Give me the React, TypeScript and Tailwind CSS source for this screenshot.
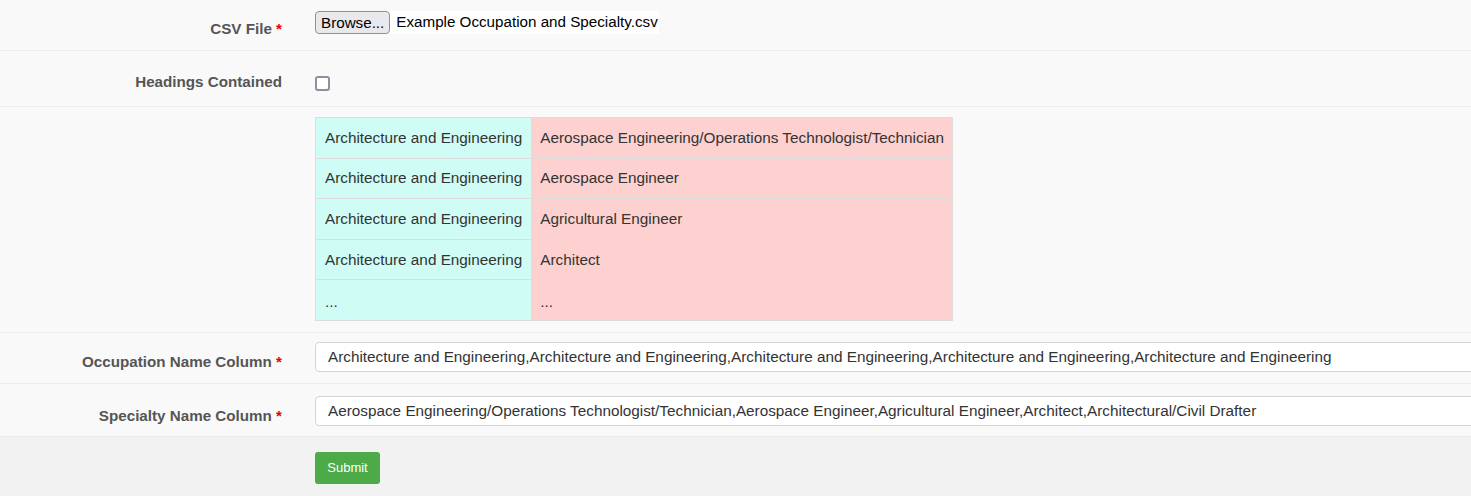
import React from 'react';

const rows = [
  ['Architecture and Engineering', 'Aerospace Engineering/Operations Technologist/Technician'],
  ['Architecture and Engineering', 'Aerospace Engineer'],
  ['Architecture and Engineering', 'Agricultural Engineer'],
  ['Architecture and Engineering', 'Architect'],
  ['...', '...'],
];

const Label = ({ text, required }: { text: string; required?: boolean }) => (
  <div className="w-[282px] shrink-0 text-right text-[15.2px] font-bold text-[#555]">
    {text}
    {required && <span className="text-[#e00]"> *</span>}
  </div>
);

const App = () => {
  return (
    <div
      className="w-full h-[496px] overflow-hidden bg-[#f9f9f9] text-[#333]"
      style={{ fontFamily: '"Liberation Sans", Arial, sans-serif' }}
    >
      {/* CSV file */}
      <div className="flex h-[51px] border-b border-[#ececec]">
        <div className="pt-[18px]">
          <Label text="CSV File" required />
        </div>
        <div className="ml-[33px] pt-[11px]">
          <div className="flex h-[23px] items-center bg-white pr-[1px]">
            <button className="h-[23px] rounded-[4px] border border-[#8f8f9d] bg-[#e9e9ed] px-[5px] text-[15.2px] text-black">
              Browse...
            </button>
            <span className="ml-[6px] text-[15.2px] text-black">Example Occupation and Specialty.csv</span>
          </div>
        </div>
      </div>

      {/* headings */}
      <div className="flex h-[56px] items-center border-b border-[#ececec] pt-[7px]">
        <Label text="Headings Contained" />
        <div className="ml-[33px] pt-[2px]">
          <div className="h-[15px] w-[15px] rounded-[3px] border-2 border-[#8f8f9d] bg-white" />
        </div>
      </div>

      {/* preview table */}
      <div className="flex h-[226px] border-b border-[#ececec] pt-[10px]">
        <div className="w-[282px] shrink-0" />
        <div className="ml-[33px]">
          <table className="border-collapse text-[15.3px] text-[#333]">
            <tbody>
              {rows.map((r, i) => (
                <tr key={i} className="h-[40.6px]">
                  <td className={`border border-[#ddd] bg-[#cffcf5] px-[9px] ${r[0] === '...' ? 'pt-[4px]' : 'pt-[1px]'}`}>
                    {r[0]}
                  </td>
                  <td className={`border border-[#ddd] bg-[#fcd1cf] px-[8px] ${r[1] === '...' ? 'pt-[4px]' : 'pt-[1px]'}`}>
                    {r[1]}
                  </td>
                </tr>
              ))}
            </tbody>
          </table>
        </div>
      </div>

      {/* occupation */}
      <div className="flex h-[51px] border-b border-[#ececec]">
        <div className="pt-[18px]">
          <Label text="Occupation Name Column" required />
        </div>
        <div className="ml-[33px] pt-[9px]">
          <input
            readOnly
            value="Architecture and Engineering,Architecture and Engineering,Architecture and Engineering,Architecture and Engineering,Architecture and Engineering"
            className="h-[30px] w-[1200px] rounded-[4px] border border-[#d5d5d5] bg-white px-[12px] text-[15.3px] text-[#333] outline-none"
          />
        </div>
      </div>

      {/* specialty */}
      <div className="flex h-[53px] border-b border-[#ececec]">
        <div className="pt-[21px]">
          <Label text="Specialty Name Column" required />
        </div>
        <div className="ml-[33px] pt-[12px]">
          <input
            readOnly
            value="Aerospace Engineering/Operations Technologist/Technician,Aerospace Engineer,Agricultural Engineer,Architect,Architectural/Civil Drafter"
            className="h-[30px] w-[1200px] rounded-[4px] border border-[#d5d5d5] bg-white px-[12px] text-[15.3px] text-[#333] outline-none"
          />
        </div>
      </div>

      {/* footer */}
      <div className="flex h-[60px] bg-[#f2f2f2] pt-[15px]">
        <div className="w-[282px] shrink-0" />
        <div className="ml-[33px]">
          <button className="h-[32px] w-[65px] rounded-[3px] bg-[#4cab48] text-[13px] text-white">Submit</button>
        </div>
      </div>
    </div>
  );
};

export default App;
